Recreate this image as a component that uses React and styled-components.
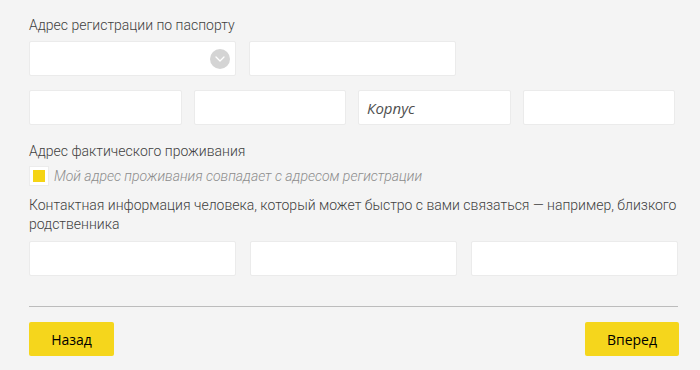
import styled, { createGlobalStyle } from "styled-components";

const GlobalStyle = createGlobalStyle`
  html, body {
    margin: 0;
    padding: 0;
    background: #f4f4f4;
  }
  body {
    font-family: Roboto, "Open Sans", "Liberation Sans", sans-serif;
  }
`;

const Page = styled.div`
  width: 700px;
  height: 370px;
  box-sizing: border-box;
  padding: 16px 22px 0 29px;
  background: #f4f4f4;
  display: flex;
  flex-direction: column;
`;

const SectionTitle = styled.div`
  font-family: Roboto, "Open Sans", sans-serif;
  font-size: 14px;
  line-height: 19px;
  font-weight: 300;
  color: #3f3f3f;
  margin-top: ${({ $top }) => $top || 0}px;
`;

const FieldRow = styled.div`
  display: grid;
  grid-template-columns: ${({ $cols }) => `repeat(${$cols}, 1fr)`};
  column-gap: ${({ $gap }) => $gap}px;
  margin-top: ${({ $top }) => $top}px;
  width: ${({ $width }) => $width}px;
`;

const Field = styled.div`
  position: relative;
  height: ${({ $h }) => $h || 35}px;
  box-sizing: border-box;
  background: #fff;
  border: 1px solid #ebebeb;
  border-radius: 2px;
  display: flex;
  align-items: center;
  padding: 0 8px;
`;

const Placeholder = styled.span`
  font-family: "Open Sans", sans-serif;
  font-size: 15px;
  font-style: italic;
  color: #4f4f4f;
`;

const SelectToggle = styled.span`
  position: absolute;
  right: 5px;
  top: 50%;
  transform: translateY(-50%);
  width: 20px;
  height: 20px;
  border-radius: 50%;
  background: #d4d4d4;
  display: flex;
  align-items: center;
  justify-content: center;
`;

const CheckRow = styled.label`
  display: flex;
  align-items: center;
  gap: 5px;
  margin-top: 5px;
`;

const CheckBox = styled.span`
  width: 20px;
  height: 20px;
  box-sizing: border-box;
  background: #fff;
  border: 1px solid #ececec;
  display: flex;
  align-items: center;
  justify-content: center;

  &::after {
    content: "";
    width: 12px;
    height: 12px;
    background: #f5d414;
  }
`;

const CheckLabel = styled.span`
  font-family: Roboto, "Open Sans", sans-serif;
  font-size: 14px;
  font-style: italic;
  font-weight: 300;
  color: #8c8c8c;
`;

const Divider = styled.div`
  width: 649px;
  height: 1px;
  background: #bcbcbc;
  margin-top: 30px;
`;

const ButtonBar = styled.div`
  width: 650px;
  display: flex;
  justify-content: space-between;
  margin-top: 15px;
`;

const Button = styled.button`
  height: 34px;
  width: ${({ $w }) => $w}px;
  border: none;
  border-radius: 2px;
  background: #f5d61c;
  color: #000;
  font-family: "Open Sans", "Liberation Sans", sans-serif;
  font-size: 14px;
  padding: 0;
  cursor: pointer;
`;

export default function App() {
  return (
    <>
      <GlobalStyle />
      <Page>
        <SectionTitle>Адрес регистрации по паспорту</SectionTitle>
        <FieldRow $cols={3} $gap={13} $width={647} $top={6}>
          <Field>
            <SelectToggle>
              <svg width="10" height="6" viewBox="0 0 10 6" fill="none">
                <path d="M1 1l4 4 4-4" stroke="#fff" strokeWidth="1.3" strokeLinecap="round" strokeLinejoin="round" />
              </svg>
            </SelectToggle>
          </Field>
          <Field />
        </FieldRow>
        <FieldRow $cols={4} $gap={12} $width={646} $top={14}>
          <Field />
          <Field />
          <Field>
            <Placeholder>Корпус</Placeholder>
          </Field>
          <Field />
        </FieldRow>

        <SectionTitle $top={17}>Адрес фактического проживания</SectionTitle>
        <CheckRow>
          <CheckBox />
          <CheckLabel>Мой адрес проживания совпадает с адресом регистрации</CheckLabel>
        </CheckRow>

        <SectionTitle $top={10}>
          Контактная информация человека, который может быстро с вами связаться — например, близкого родственника
        </SectionTitle>
        <FieldRow $cols={3} $gap={14} $width={649} $top={7}>
          <Field $h={35} />
          <Field $h={35} />
          <Field $h={35} />
        </FieldRow>

        <Divider />
        <ButtonBar>
          <Button $w={85}>Назад</Button>
          <Button $w={94}>Вперед</Button>
        </ButtonBar>
      </Page>
    </>
  );
}
